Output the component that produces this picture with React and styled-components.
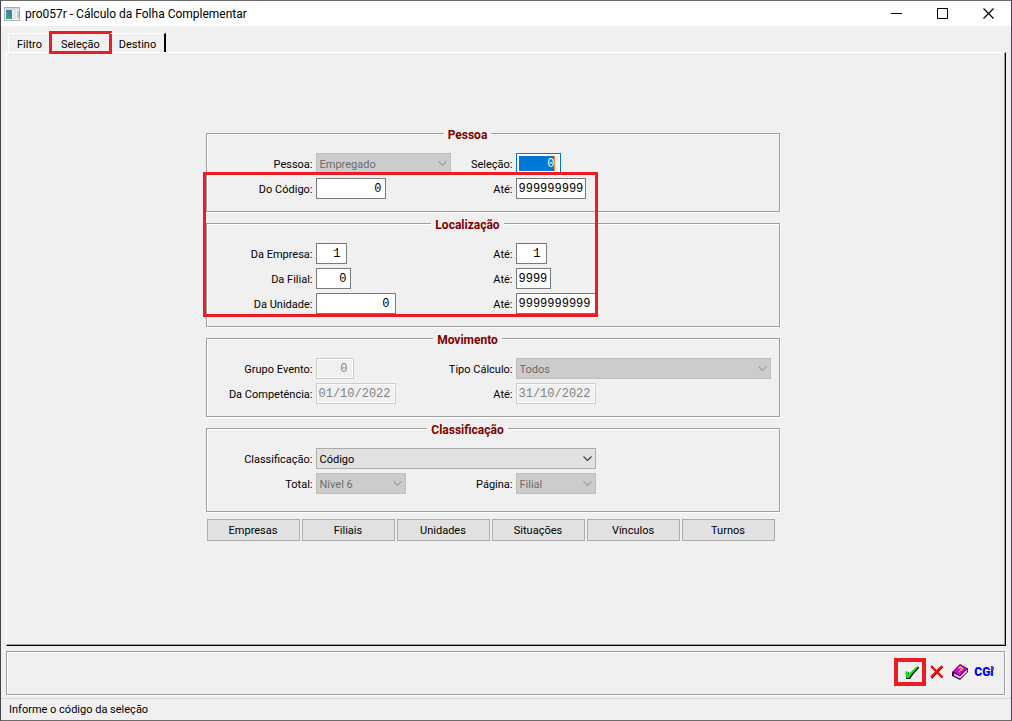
import React, { useState } from 'react';
import styled, { createGlobalStyle } from 'styled-components';

const GlobalStyle = createGlobalStyle`
  * {
    box-sizing: border-box;
  }

  body {
    margin: 0;
    background: #f0f0f0;
    color: #000;
    font-family: Roboto, "Liberation Sans", sans-serif;
    font-size: 11px;
    line-height: 15px;
  }

  button, input, select {
    margin: 0;
    font: inherit;
    color: inherit;
    border-radius: 0;
    outline: none;
  }
`;

const Window = styled.div`
  display: flex;
  flex-direction: column;
  min-height: 100vh;
  border: 1px solid #45414d;
  border-top-color: #6b6b6b;
  border-bottom-color: #6b6b6b;
  background: #f0f0f0;
`;

const TitleBar = styled.header`
  display: flex;
  align-items: center;
  height: 25px;
  padding-left: 3px;
  background: #fff;
`;

const Title = styled.h1`
  flex: 1;
  margin: 0 0 0 5px;
  font-size: 12px;
  font-weight: 400;
  line-height: 16px;
`;

const WindowButton = styled.button`
  display: flex;
  align-items: center;
  justify-content: center;
  width: 46px;
  height: 25px;
  padding: 0;
  border: 0;
  background: transparent;

  &:hover {
    background: #e5e5e5;
  }
`;

const TabBar = styled.nav`
  display: flex;
  align-items: flex-end;
  height: 26px;
  padding-left: 7px;
`;

const Tab = styled.button`
  position: relative;
  height: 19px;
  padding: 2px ${props => props.$active ? '10px' : '8px'} 0;
  border: 0;
  border-top: 1px solid ${props => props.$active ? 'transparent' : '#fff'};
  border-left: 1px solid ${props => props.$first ? '#fff' : 'transparent'};
  border-right: ${props => props.$last ? '2px solid #000' : '0'};
  border-top-left-radius: ${props => props.$first ? '2px' : '0'};
  background: transparent;

  /* marca a aba em destaque */
  &::after {
    content: "";
    display: ${props => props.$active ? 'block' : 'none'};
    position: absolute;
    inset: -3px -2px -2px;
    border: 3px solid #ed1c24;
  }
`;

const Page = styled.main`
  flex: 1;
  display: flex;
  justify-content: center;
  margin: 0 5px;
  padding: 71px 27px 25px 0;
  border: 1px solid #fff;
  border-right-color: #000;
  border-bottom-color: #000;
  box-shadow: inset -1px -1px 0 #a0a0a0;
`;

const Form = styled.form`
  position: relative;
  display: flex;
  flex-direction: column;
  gap: 2px;
  width: 574px;
`;

const Group = styled.fieldset`
  min-width: 0;
  margin: 0;
  padding: 10px 50px ${props => props.$tall ? '17px' : '12px'} 0;
  border: 1px solid #a0a0a0;
  box-shadow: 1px 1px 0 #fff, inset 1px 1px 0 #fff;
`;

const Legend = styled.legend`
  margin: 0 auto;
  padding: 4px 4px 0;
  background: #f0f0f0;
  color: #800000;
  font-size: 12px;
  font-weight: 700;
`;

const Fields = styled.div`
  display: grid;
  grid-template-columns: 109px 135px 65px 255px;
  row-gap: 4px;
  align-items: center;
`;

const Label = styled.label`
  justify-self: end;
  padding: 2px 3px 0 0;
  white-space: nowrap;
`;

const TextBox = styled.input`
  width: ${props => props.$width}px;
  height: 21px;
  padding: 0 ${props => props.$left ? '0' : props.$roomy ? '5px' : '3px'} 0 2px;
  border: 1px solid #7a7a7a;
  background: #fff;
  font-family: "Liberation Mono", monospace;
  font-size: 12px;
  text-align: ${props => props.$left ? 'left' : 'right'};

  &:disabled {
    border-color: #ccc;
    background: #f0f0f0;
    box-shadow: inset 0 0 0 1px #fff;
    color: #838383;
  }
`;

const SelectedBox = styled(TextBox)`
  padding: 2px 5px 2px 2px;
  border-color: #0078d7;
  background-color: #fff;
  background-image: linear-gradient(to left, #ff8728 1px, #0078d7 1px);
  background-origin: content-box;
  background-clip: content-box;
  background-repeat: no-repeat;
  box-shadow: inset 0 0 0 2px #fff;
  color: #fff;
`;

const SelectWrap = styled.span`
  position: relative;
  grid-column: span ${props => props.$span || 1};
  width: ${props => props.$width}px;
  color: ${props => props.$disabled ? '#a0a0a0' : '#404040'};

  svg {
    position: absolute;
    right: 4px;
    top: 8px;
    pointer-events: none;
  }
`;

const SelectBox = styled.select`
  display: block;
  appearance: none;
  width: 100%;
  height: 21px;
  padding: 2px 16px 0 3px;
  border: 1px solid #adadad;
  background: #e1e1e1;
  color: #000;

  &:disabled {
    border-color: #bfbfbf;
    background: #ccc;
    color: #6d6d6d;
    opacity: 1;
  }
`;

const ButtonRow = styled.div`
  display: flex;
  gap: 2px;
  margin-top: 5px;
  padding: 0 5px 0 1px;
`;

const PushButton = styled.button`
  flex: 1;
  height: 22px;
  padding: 0;
  border: 1px solid #adadad;
  background: #e1e1e1;

  &:hover {
    border-color: #0078d7;
  }
`;

const Highlight = styled.div`
  position: absolute;
  left: -3px;
  top: 48px;
  width: 395px;
  height: 145px;
  border: 3px solid #ed1c24;
  pointer-events: none;
`;

const ActionBar = styled.footer`
  display: flex;
  align-items: center;
  justify-content: flex-end;
  height: 44px;
  margin: 5px 6px 3px 5px;
  padding: 0 8px 2px 0;
  border: 1px solid #a0a0a0;
  box-shadow: 1px 1px 0 #fff, inset 1px 1px 0 #fff;
`;

const ActionButton = styled.button`
  display: flex;
  align-items: center;
  justify-content: center;
  width: 24px;
  height: 28px;
  padding: 0;
  border: 0;
  background: transparent;
`;

const CancelButton = styled(ActionButton)`
  width: 22px;
`;

const ConfirmButton = styled(ActionButton)`
  width: 32px;
  padding-left: 4px;
  border: 4px solid #ed1c24;
`;

const Brand = styled.span`
  position: relative;
  color: #0000f0;
  font-size: 12px;
  font-weight: 900;

  &::after {
    content: "";
    position: absolute;
    right: 0;
    top: 2px;
    width: 3px;
    height: 3px;
    background: #f01818;
  }
`;

const StatusBar = styled.div`
  height: 22px;
  padding: 3px 8px;
  border-top: 1px solid #d7d7d7;
`;

function AppIcon() {
    return (
        <svg width="16" height="14" viewBox="0 0 16 14" shapeRendering="crispEdges">
            <rect x="0" y="0" width="16" height="14" fill="#a9adb0" />
            <rect x="1" y="1" width="14" height="2" fill="#d5d9dc" />
            <rect x="1" y="3" width="14" height="10" fill="#f3f5f6" />
            <rect x="2" y="3" width="6" height="9" fill="#3c86a0" />
            <path d="M2 12V5h2v3h2v4z" fill="#3f9f78" />
            <rect x="9" y="3" width="3" height="9" fill="#dfe5e8" />
            <rect x="13" y="4" width="2" height="7" fill="#b5d0c8" />
        </svg>
    )
}

function Chevron() {
    return (
        <svg width="9" height="6" viewBox="0 0 9 6">
            <path d="M0.5 0.5L4.5 4.5L8.5 0.5" fill="none" stroke="currentColor" strokeWidth="1.2" />
        </svg>
    )
}

function CheckIcon() {
    return (
        <svg width="14" height="13" viewBox="0 0 14 13">
            <path d="M1 6.5H4V9L12.5 1H14V2L8.5 8L5 13H1z" fill="#000" />
            <path d="M0 5.5H3V8.5L11.5 0.5H13.5L7.5 7L4 12H1.5z" fill="#00f010" />
        </svg>
    )
}

function CancelIcon() {
    return (
        <svg width="14" height="14" viewBox="0 0 14 14">
            <path d="M1.5 1.5L12.5 12.5M12.5 1.5L1.5 13" fill="none" stroke="#700000" strokeWidth="2" />
            <path d="M1 1L12 12M12 1L1 12" fill="none" stroke="#f01010" strokeWidth="2" />
        </svg>
    )
}

function BookIcon() {
    return (
        <svg width="17" height="16" viewBox="0 0 17 16">
            <path d="M0 8L8 0L16 4.5V8L8 16L0 12z" fill="#480048" />
            <path d="M1.5 7.5L8 1L14.5 4.5L8 11z" fill="#e000e0" />
            <path d="M2 9.5L8 12.5L15 5.5V8L8 14.5L2 11.5z" fill="#fff" />
            <path d="M2 10.5L8 13.5L15 6.8" fill="none" stroke="#707070" strokeWidth="0.6" />
            <path d="M6.5 4.2L8.5 3L10.5 4.2L9.5 5.8L8 6M7 7.4L8 8" fill="none" stroke="#ffe000" strokeWidth="1.3" />
        </svg>
    )
}

function Field(props) {
    return (
        <>
            <Label htmlFor={props.id}>{props.label}</Label>
            {props.selected ?
                <SelectedBox id={props.id} $width={props.width} defaultValue={props.value} />
                :
                <TextBox id={props.id} $width={props.width} $roomy={props.roomy} $left={props.left} disabled={props.disabled} defaultValue={props.value} />
            }
        </>
    )
}

function SelectField(props) {
    return (
        <>
            <Label htmlFor={props.id}>{props.label}</Label>
            <SelectWrap $width={props.width} $span={props.span} $disabled={props.disabled}>
                <SelectBox id={props.id} disabled={props.disabled}>
                    <option>{props.value}</option>
                </SelectBox>
                <Chevron />
            </SelectWrap>
        </>
    )
}

const tabs = ['Filtro', 'Seleção', 'Destino'];
const buttons = ['Empresas', 'Filiais', 'Unidades', 'Situações', 'Vínculos', 'Turnos'];

function App() {
    const [tab, setTab] = useState(1);

    return (
        <Window>
            <GlobalStyle />
            <TitleBar>
                <AppIcon />
                <Title>pro057r - Cálculo da Folha Complementar</Title>
                <WindowButton aria-label="Minimizar">
                    <svg width="11" height="11" viewBox="0 0 11 11"><path d="M0 5.5H11" stroke="#000" /></svg>
                </WindowButton>
                <WindowButton aria-label="Maximizar">
                    <svg width="11" height="11" viewBox="0 0 11 11"><path d="M0.5 0.5H10.5V10.5H0.5z" fill="none" stroke="#000" /></svg>
                </WindowButton>
                <WindowButton aria-label="Fechar">
                    <svg width="11" height="11" viewBox="0 0 11 11"><path d="M0.5 0.5L10.5 10.5M10.5 0.5L0.5 10.5" stroke="#000" strokeWidth="1.2" /></svg>
                </WindowButton>
            </TitleBar>
            <TabBar>
                {tabs.map((item, index) => (
                    <Tab key={index} type="button" $first={index == 0} $last={index == tabs.length - 1} $active={index == tab} onClick={() => setTab(index)}>
                        {item}
                    </Tab>
                ))}
            </TabBar>
            <Page>
                <Form onSubmit={(e) => e.preventDefault()}>
                    <Group>
                        <Legend>Pessoa</Legend>
                        <Fields>
                            <SelectField id="pessoa" label="Pessoa:" value="Empregado" width={135} disabled />
                            <Field id="selecao" label="Seleção:" value="0" width={45} selected />
                            <Field id="codigoDe" label="Do Código:" value="0" width={70} />
                            <Field id="codigoAte" label="Até:" value="999999999" width={70} left />
                        </Fields>
                    </Group>
                    <Group>
                        <Legend>Localização</Legend>
                        <Fields>
                            <Field id="empresaDe" label="Da Empresa:" value="1" width={31} roomy />
                            <Field id="empresaAte" label="Até:" value="1" width={31} roomy />
                            <Field id="filialDe" label="Da Filial:" value="0" width={35} />
                            <Field id="filialAte" label="Até:" value="9999" width={35} left />
                            <Field id="unidadeDe" label="Da Unidade:" value="0" width={80} roomy />
                            <Field id="unidadeAte" label="Até:" value="9999999999" width={80} left />
                        </Fields>
                    </Group>
                    <Group>
                        <Legend>Movimento</Legend>
                        <Fields>
                            <Field id="grupo" label="Grupo Evento:" value="0" width={38} roomy disabled />
                            <SelectField id="tipo" label="Tipo Cálculo:" value="Todos" width={255} disabled />
                            <Field id="competenciaDe" label="Da Competência:" value="01/10/2022" width={80} left disabled />
                            <Field id="competenciaAte" label="Até:" value="31/10/2022" width={80} left disabled />
                        </Fields>
                    </Group>
                    <Group $tall>
                        <Legend>Classificação</Legend>
                        <Fields>
                            <SelectField id="classificacao" label="Classificação:" value="Código" width={280} span={3} />
                            <SelectField id="total" label="Total:" value="Nível 6" width={90} disabled />
                            <SelectField id="pagina" label="Página:" value="Filial" width={80} disabled />
                        </Fields>
                    </Group>
                    <ButtonRow>
                        {buttons.map((item) => (
                            <PushButton key={item} type="button">{item}</PushButton>
                        ))}
                    </ButtonRow>
                    <Highlight />
                </Form>
            </Page>
            <ActionBar>
                <ConfirmButton aria-label="Confirmar"><CheckIcon /></ConfirmButton>
                <CancelButton aria-label="Cancelar"><CancelIcon /></CancelButton>
                <ActionButton aria-label="Ajuda"><BookIcon /></ActionButton>
                <ActionButton aria-label="CGi"><Brand>CGi</Brand></ActionButton>
            </ActionBar>
            <StatusBar>Informe o código da seleção</StatusBar>
        </Window>
    )
}

export default App;
